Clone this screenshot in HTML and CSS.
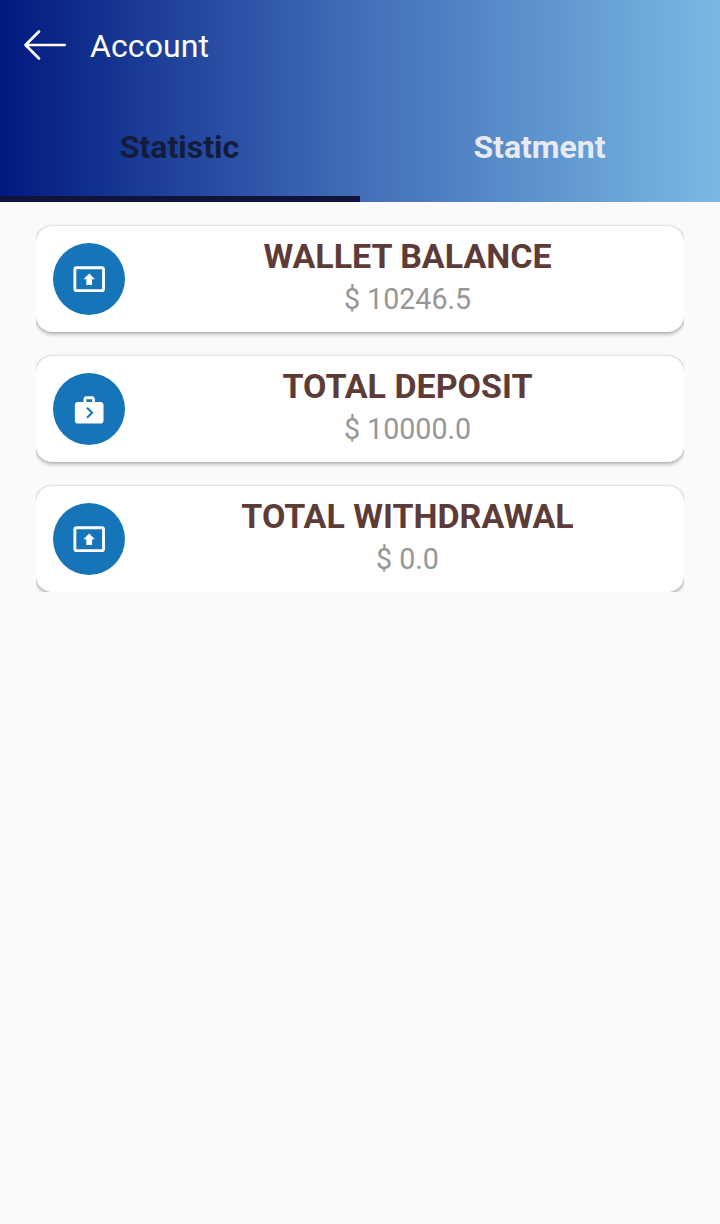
FILE: index.html
```html
<!DOCTYPE html>
<html lang="en">
<head>
<meta charset="utf-8">
<title>Account</title>
<link rel="stylesheet" href="styles.css">
</head>
<body>
<header class="header">
  <div class="toolbar">
    <svg class="back" viewBox="0 0 44 32" fill="none" stroke="#fff" stroke-width="2.7" stroke-linecap="round" stroke-linejoin="round"><path d="M16 2.500 2.500 16 16 29.500M3 16h38.700"/></svg>
    <h1 class="title">Account</h1>
  </div>
  <nav class="tabs">
    <a class="tab active">Statistic</a>
    <a class="tab">Statment</a>
  </nav>
</header>
<main class="list">
  <section class="card">
    <div class="badge"><svg class="icon" viewBox="0 0 24 24"><path d="M21 3H3c-1.110 0-2 .890-2 2v14c0 1.110.890 2 2 2h18c1.110 0 2-.890 2-2V5c0-1.110-.890-2-2-2zm0 16.020H3V4.980h18v14.040zM10 12H8l4-4 4 4h-2v4h-4v-4z"/></svg></div>
    <div class="info"><h2 class="name">WALLET BALANCE</h2><p class="amount">$ 10246.5</p></div>
  </section>
  <section class="card">
    <div class="badge"><svg class="icon" viewBox="0 0 24 24"><path d="M20 7h-4V5c0-.55-.22-1.050-.59-1.410C15.050 3.220 14.550 3 14 3h-4c-1.100 0-2 .9-2 2v2H4c-1.100 0-2 .9-2 2v11c0 1.100.9 2 2 2h16c1.100 0 2-.9 2-2V9c0-1.100-.9-2-2-2zM10 5h4v2h-4V5zm1 13.500l-1-1 3-3-3-3 1-1 4 4-4 4z"/></svg></div>
    <div class="info"><h2 class="name">TOTAL DEPOSIT</h2><p class="amount">$ 10000.0</p></div>
  </section>
  <section class="card">
    <div class="badge"><svg class="icon" viewBox="0 0 24 24"><path d="M21 3H3c-1.110 0-2 .890-2 2v14c0 1.110.890 2 2 2h18c1.110 0 2-.890 2-2V5c0-1.110-.890-2-2-2zm0 16.020H3V4.980h18v14.040zM10 12H8l4-4 4 4h-2v4h-4v-4z"/></svg></div>
    <div class="info"><h2 class="name">TOTAL WITHDRAWAL</h2><p class="amount">$ 0.0</p></div>
  </section>
</main>
</body>
</html>
```
FILE: styles.css
```css
* { box-sizing: border-box; margin: 0; padding: 0; }
body {
  min-height: 1224px;
  background: #fafafa;
  font-family: Roboto, sans-serif;
}
.header {
  height: 202px;
  background: linear-gradient(90deg, #001a80 0%, #426eb8 50%, #7ab9e4 100%);
}
.toolbar {
  display: flex;
  align-items: center;
  gap: 23px;
  height: 90px;
  padding-left: 23px;
}
.back { width: 44px; height: 32px; }
.title {
  font-size: 32px;
  font-weight: 400;
  line-height: 38px;
  letter-spacing: 0.1px;
  color: #fff;
  padding-top: 2px;
}
.tabs { display: flex; height: 112px; }
.tab {
  flex: 1;
  padding-top: 38px;
  padding-right: 1px;
  text-align: center;
  font-size: 32px;
  font-weight: 700;
  line-height: 38px;
  color: #e8eaf3;
}
.active { color: #141c3c; border-bottom: 6px solid #10143a; }
.list {
  display: flex;
  flex-direction: column;
  gap: 24px;
  margin: 0 36px;
  padding-top: 24px;
  height: 390px;
  overflow: hidden;
}
.card {
  display: flex;
  flex: none;
  align-items: center;
  height: 106px;
  padding-left: 17px;
  border-radius: 16px;
  background: #fff;
  box-shadow: 0 2px 4px rgba(0, 0, 0, .3), 0 0 2px rgba(0, 0, 0, .22);
}
.badge {
  display: flex;
  align-items: center;
  justify-content: center;
  width: 72px;
  height: 72px;
  border-radius: 50%;
  background: #1674b8;
}
.icon { width: 34.4px; height: 34.4px; fill: #fff; }
.info {
  flex: 1;
  padding: 0 0 5px 6px;
  text-align: center;
}
.name {
  font-size: 34px;
  font-weight: 700;
  line-height: 40px;
  color: #5d3c38;
}
.amount {
  font-size: 28.6px;
  line-height: 38px;
  margin-top: 4px;
  color: #969696;
}
```
